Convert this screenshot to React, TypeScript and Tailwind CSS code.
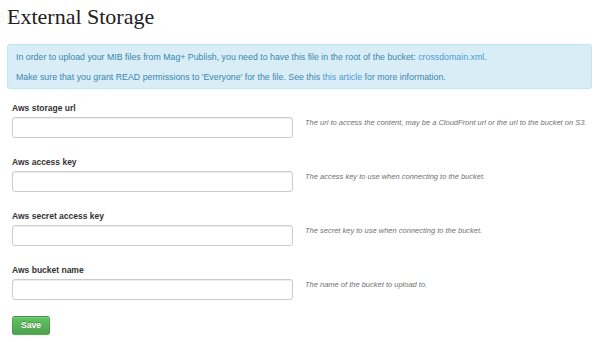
import * as React from "react";

const fields = [
  {
    label: "Aws storage url",
    help: "The url to access the content, may be a CloudFront url or the url to the bucket on S3.",
  },
  { label: "Aws access key", help: "The access key to use when connecting to the bucket." },
  { label: "Aws secret access key", help: "The secret key to use when connecting to the bucket." },
  { label: "Aws bucket name", help: "The name of the bucket to upload to." },
];

function Field({ label, help }: { label: string; help: string }) {
  return (
    <div className="mb-[18px] last-of-type:mb-[16px]">
      <label className="block text-[8.5px] leading-[12px] font-bold text-[#333]">{label}</label>
      <div className="mt-[3px] flex items-start">
        <input
          type="text"
          className="h-[21px] w-[281px] rounded-[3px] border border-[#ccc] bg-white shadow-[inset_0_1px_1px_rgba(0,0,0,0.075)] outline-none"
        />
        <p className="ml-[12px] text-[7.5px] leading-[12px] italic text-[#707070]">{help}</p>
      </div>
    </div>
  );
}

export default function App() {
  return (
    <div className="h-[342px] w-[600px] bg-white font-['Liberation_Sans',Arial,sans-serif]">
      <h1 className="pt-[4px] pl-[7px] font-['Liberation_Serif',Georgia,serif] text-[22px] leading-[26px] font-normal text-[#222]">
        External Storage
      </h1>

      <div className="mx-[7px] mt-[14px] w-[585px] rounded-[3px] border border-[#bce8f1] bg-[#d9edf7] pt-[6px] pb-[5px] pl-[8px] text-[8.8px] leading-[12px] text-[#3a87ad]">
        <p>
          In order to upload your MIB files from Mag+ Publish, you need to have this file in the root of the bucket:{" "}
          <a className="text-[#4d9ad6]">crossdomain.xml</a>.
        </p>
        <p className="mt-[8px]">
          Make sure that you grant READ permissions to 'Everyone' for the file. See this{" "}
          <a className="text-[#4d9ad6]">this article</a> for more information.
        </p>
      </div>

      <form className="mt-[13px] pl-[12px]">
        {fields.map((f) => (
          <Field key={f.label} label={f.label} help={f.help} />
        ))}
        <button
          type="button"
          className="block h-[19px] w-[38px] rounded-[3px] border border-[rgba(0,0,0,0.12)] bg-gradient-to-b from-[#62c462] to-[#4fa14f] text-[8.5px] font-bold text-white [text-shadow:0_-1px_0_rgba(0,0,0,0.25)] shadow-[inset_0_1px_0_rgba(255,255,255,0.2),0_1px_2px_rgba(0,0,0,0.05)]"
        >
          Save
        </button>
      </form>
    </div>
  );
}
